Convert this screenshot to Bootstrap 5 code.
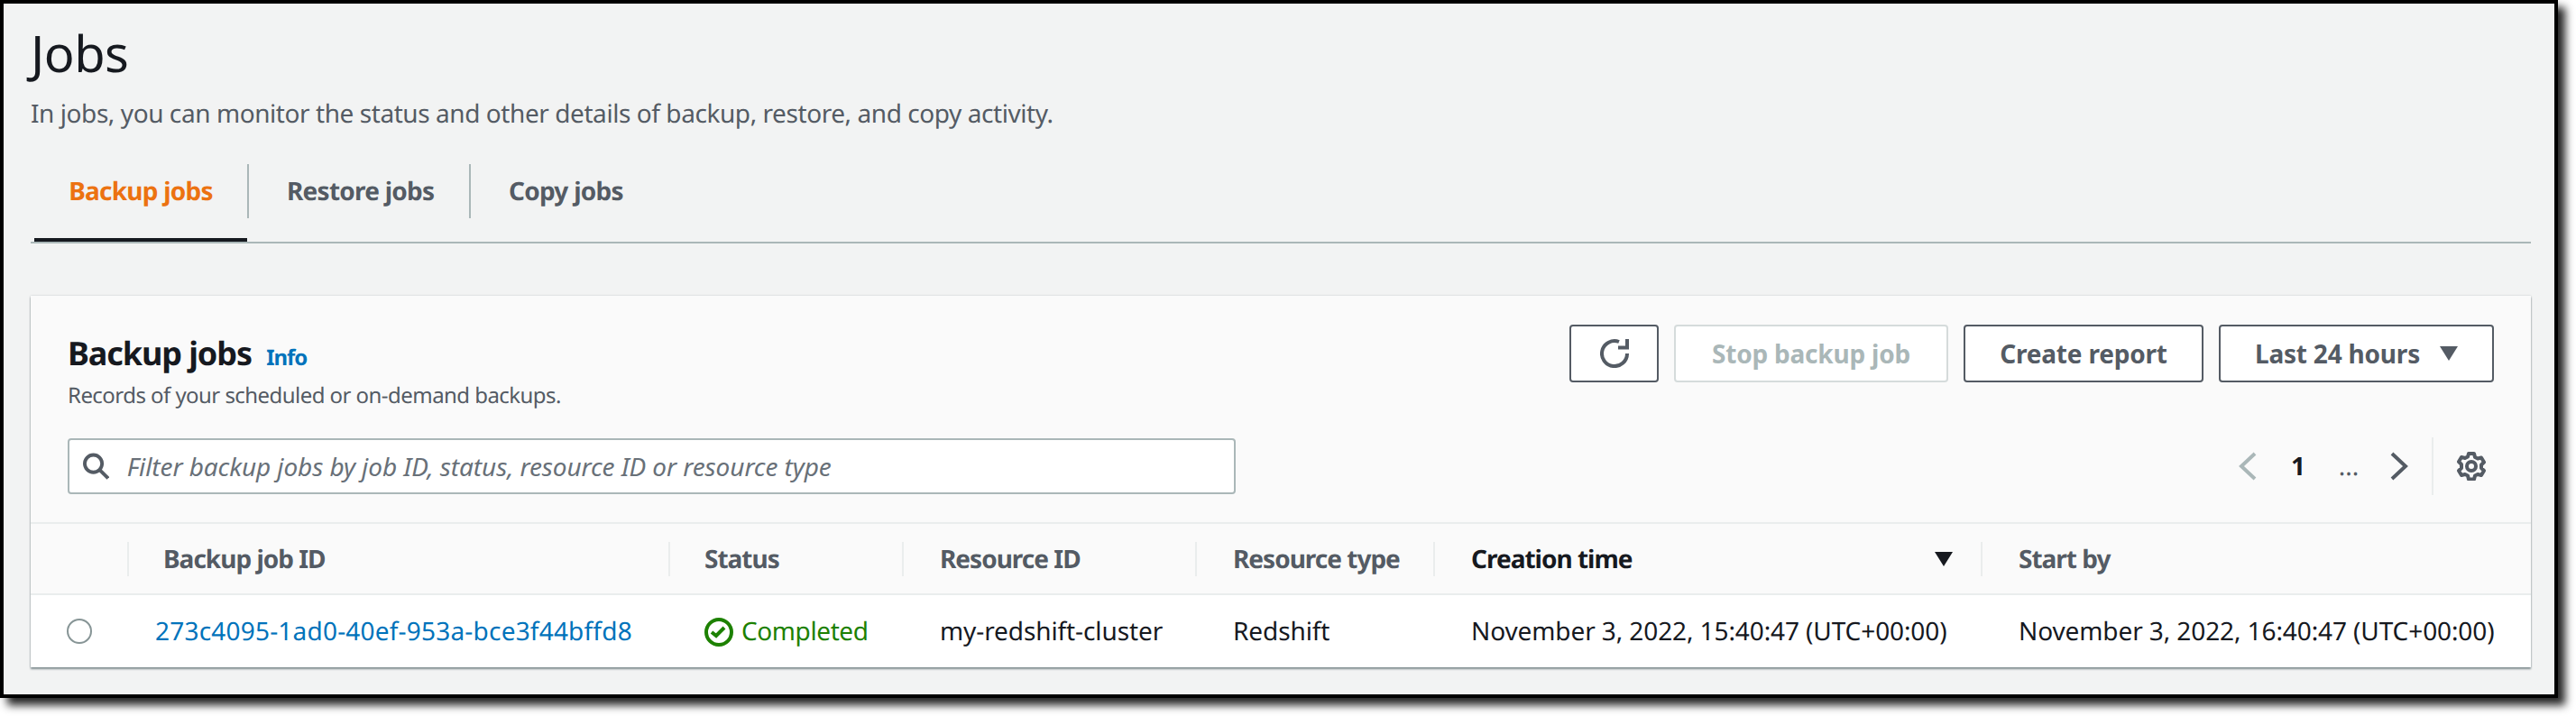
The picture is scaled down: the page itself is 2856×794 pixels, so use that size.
<!DOCTYPE html>
<html lang="en">
<head>
<meta charset="utf-8">
<title>Jobs</title>
<link rel="stylesheet" href="https://cdn.jsdelivr.net/npm/bootstrap@5.3.0/dist/css/bootstrap.min.css">
<style>
html,body{margin:0;background:#fff;overflow:hidden}
body{font-family:"Noto Sans","Open Sans",sans-serif;font-size:28px;color:#16191f;height:794px;text-rendering:geometricPrecision}
.frame{width:2836px;height:774px;border:4px solid #000;background:#f2f3f3;padding:0 26px 0 30px;box-shadow:8px 8px 9px rgba(0,0,0,.85)}
.page-ttl{font-size:56px;font-weight:400;line-height:72px;margin:19px 0 0;letter-spacing:-.5px}
.page-sub{font-size:28px;line-height:40px;color:#545b64;margin:0;padding-top:11px;letter-spacing:-.43px}
.tabbar{border-bottom:2px solid #aab7b8;height:100px;margin-top:24px;padding-left:4px;align-items:stretch;flex-wrap:nowrap}
.tabbar .nav-link{font-size:28px;font-weight:700;line-height:40px;color:#545b64;padding:0 40px 14px;height:98px;display:flex;align-items:center;white-space:nowrap;letter-spacing:-.75px}
.tabbar .nav-link.on{color:#ec7211;border-bottom:4px solid #16191f;padding:0 0 10px;justify-content:center}
.tabbar .nav-item{position:relative}
.tabbar .nav-item.sepd::after{content:"";position:absolute;right:-2px;top:12px;width:2px;height:60px;background:#aab7b8}
.tabbar .nav-link.tablink-1{width:236px}
.tabbar .nav-link.tablink-2{width:242px}
.tabbar .nav-item.sepd{margin-right:4px}
.panel{margin-top:58px;border:0;border-radius:0;background:#fafafa;box-shadow:0 2px 2px rgba(0,28,36,.45),0 0 2px rgba(0,28,36,.2);overflow:hidden}
.panel-top{padding:32px 41px 0 41px;height:253px;border-bottom:2px solid #eaeded}
.panel-name{font-size:36px;font-weight:700;line-height:44px;margin:0;letter-spacing:-1.1px}
.info-lnk{font-size:24px;font-weight:700;color:#0073bb;text-decoration:none;margin-left:8px;letter-spacing:-1px}
.panel-note{font-size:24px;line-height:32px;color:#545b64;margin:0;padding-top:4px;letter-spacing:-.55px}
.head-l{padding-top:10px}
.act-row{gap:17px}
.act{font-size:28px;font-weight:700;line-height:40px;height:64px;padding:0;border:2px solid #545b64;border-radius:4px;background:#fff;color:#545b64;display:flex;align-items:center;justify-content:center;letter-spacing:-.2px}
.act.dis{border-color:#d5dbdb;color:#aab7b8;background:#fff;opacity:1;width:304px}
.act.ic{width:99px}
.act.rep{width:266px}
.act.rng{width:305px}
.act svg{display:block}
.act .rng-caret{margin-left:22px}
.filter-row{margin-top:31px;height:62px}
.filter-box{width:1295px;height:62px;border:2px solid #aab7b8;border-radius:4px;background:#fff;padding:0 15px}
.filter-box input{border:0;outline:0;background:transparent;padding:0;margin-left:20px;font-size:28px;font-style:italic;color:#16191f;box-shadow:none;height:40px;letter-spacing:-.1px}
.filter-box input::placeholder{color:#687078;opacity:1;font-style:italic}
.pager{height:64px;margin-right:9px}
.pg-num{font-size:28px;font-weight:700;width:40px;text-align:center;margin-left:25px}
.pg-dots{font-size:28px;color:#545b64;width:32px;text-align:center;margin:0 29px 0 20px}
.pg-div{width:2px;height:64px;background:#eaeded;margin:0 26px 0 25px}
.jobs{table-layout:fixed;width:2772px;margin:0;--bs-table-bg:transparent}
.jobs th,.jobs td{border:0;padding:0;vertical-align:middle;white-space:nowrap;font-size:28px}
.jobs thead th{height:78px;font-weight:700;color:#545b64;background:#fafafa;border-bottom:2px solid #eaeded;position:relative;padding-left:42px;letter-spacing:-1px}
.jobs thead th.c0{padding:0}
.jobs thead th.tight{padding-left:40px}
.jobs thead th.now{color:#16191f}
.jobs thead th:not(.c0)::before{content:"";position:absolute;left:0;top:20px;height:38px;width:2px;background:#eaeded}
.jobs td{height:81px;background:#fff;padding-left:42px;color:#16191f;letter-spacing:-.1px}
.c0{width:107px}.c1{width:600px}.c2{width:259px}.c3{width:325px}.c4{width:264px}.c5{width:607px}.c6{width:610px}
.jobs td.td0{padding:0 0 0 40px}
.jobs td.td1{padding-left:31px}
.jobs td.td2{padding-left:40px;letter-spacing:-.4px}
.radio-o{width:28px;height:28px;border:2px solid #879596;border-radius:50%;background:#fff;display:block}
.job-lnk{color:#0073bb;text-decoration:none;letter-spacing:.2px}
.ok{color:#1d8102}
.ok svg{vertical-align:-7px;margin-right:9px}
.srt{position:absolute;right:30px;top:30px}
</style>
</head>
<body>
<div class="frame">
  <h1 class="page-ttl">Jobs</h1>
  <p class="page-sub">In jobs, you can monitor the status and other details of backup, restore, and copy activity.</p>
  <ul class="nav tabbar">
    <li class="nav-item sepd"><a class="nav-link on tablink-1" href="#">Backup jobs</a></li>
    <li class="nav-item sepd"><a class="nav-link tablink-2" href="#">Restore jobs</a></li>
    <li class="nav-item"><a class="nav-link" href="#">Copy jobs</a></li>
  </ul>
  <div class="card panel">
    <div class="panel-top">
      <div class="d-flex justify-content-between align-items-start">
        <div class="head-l">
          <h2 class="panel-name">Backup jobs <a class="info-lnk" href="#">Info</a></h2>
          <p class="panel-note">Records of your scheduled or on-demand backups.</p>
        </div>
        <div class="d-flex act-row">
          <button class="btn act ic" type="button" aria-label="Refresh"><svg width="32" height="32" viewBox="0 0 32 32" fill="none" stroke="#545b64" stroke-width="4"><path d="M21 3A14 14 0 1 0 30 16"/><path d="M30 0V9.500H20"/></svg></button>
          <button class="btn act dis" type="button" disabled>Stop backup job</button>
          <button class="btn act rep" type="button">Create report</button>
          <button class="btn act rng" type="button">Last 24 hours<svg class="rng-caret" width="20" height="16" viewBox="0 0 20 16"><path d="M0 0h20L10 16z" fill="#545b64"/></svg></button>
        </div>
      </div>
      <div class="d-flex justify-content-between align-items-center filter-row">
        <div class="d-flex align-items-center filter-box">
          <svg width="30" height="30" viewBox="0 0 30 30" fill="none" stroke="#545b64" stroke-width="4"><circle cx="12" cy="12" r="10"/><path d="M19 19l10 10"/></svg>
          <input class="form-control" type="text" placeholder="Filter backup jobs by job ID, status, resource ID or resource type" aria-label="Filter">
        </div>
        <div class="d-flex align-items-center pager">
          <svg width="22" height="32" viewBox="0 0 22 32" fill="none" stroke="#aab7b8" stroke-width="4"><path d="M19 2L4 16l15 14"/></svg>
          <span class="pg-num">1</span>
          <span class="pg-dots">...</span>
          <svg width="22" height="32" viewBox="0 0 22 32" fill="none" stroke="#545b64" stroke-width="4"><path d="M3 2l15 14L3 30"/></svg>
          <span class="pg-div"></span>
          <svg width="32" height="32" viewBox="0 0 32 32" fill="none" stroke="#545b64" stroke-width="4" stroke-linejoin="round"><circle cx="16" cy="16" r="5"/><path d="M13 2h6l1 4 3 1.500 4-1 3 5-3 3v3.500l3 3-3 5-4-1-3 1.500-1 4h-6l-1-4-3-1.500-4 1-3-5 3-3V14l-3-3 3-5 4 1 3-1.500z"/></svg>
        </div>
      </div>
    </div>
    <table class="table jobs">
      <colgroup><col class="c0"><col class="c1"><col class="c2"><col class="c3"><col class="c4"><col class="c5"><col class="c6"></colgroup>
      <thead>
        <tr><th class="c0"></th><th class="tight">Backup job ID</th><th class="tight">Status</th><th>Resource ID</th><th>Resource type</th><th class="now">Creation time<svg class="srt" width="22" height="18" viewBox="0 0 22 18"><path d="M1 1h20L11 17z" fill="#16191f"/></svg></th><th>Start by</th></tr>
      </thead>
      <tbody>
        <tr>
          <td class="td0"><span class="radio-o"></span></td>
          <td class="td1"><a class="job-lnk" href="#">273c4095-1ad0-40ef-953a-bce3f44bffd8</a></td>
          <td class="td2"><span class="ok"><svg width="32" height="32" viewBox="0 0 32 32" fill="none" stroke="#1d8102" stroke-width="4"><circle cx="16" cy="16" r="14"/><path d="M8 16l5 4 9-9"/></svg>Completed</span></td>
          <td>my-redshift-cluster</td>
          <td>Redshift</td>
          <td>November 3, 2022, 15:40:47 (UTC+00:00)</td>
          <td>November 3, 2022, 16:40:47 (UTC+00:00)</td>
        </tr>
      </tbody>
    </table>
  </div>
</div>
<script src="https://cdn.jsdelivr.net/npm/bootstrap@5.3.0/dist/js/bootstrap.bundle.min.js"></script>
</body>
</html>
